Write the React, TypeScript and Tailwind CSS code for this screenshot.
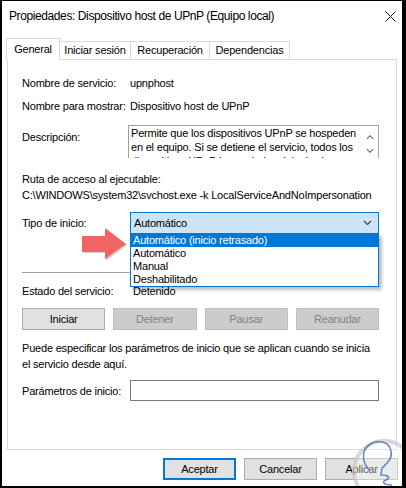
import React from 'react';

const font = "font-['Liberation_Sans',Arial,sans-serif]";

function Chevron({ up = false, color = '#606060', w = 9 }: { up?: boolean; color?: string; w?: number }) {
  return (
    <svg width={w} height="6" viewBox="0 0 9 6">
      <polyline
        points={up ? '1,5 4.5,1.5 8,5' : '1,1 4.5,4.5 8,1'}
        fill="none"
        stroke={color}
        strokeWidth="1.2"
      />
    </svg>
  );
}

function Tab({ label, width, active = false }: { label: string; width: string; active?: boolean }) {
  if (active) {
    return (
      <div className={`relative z-10 ${width} h-[22px] -mb-px bg-white border-t border-x border-[#d9d9d9] flex items-center justify-center`}>
        {label}
      </div>
    );
  }
  return (
    <div className={`${width} h-[18px] -ml-px border-t border-x border-[#d9d9d9] bg-white flex items-center justify-center`}>
      {label}
    </div>
  );
}

function DlgButton({ label, disabled = false, primary = false, className = '' }: { label: string; disabled?: boolean; primary?: boolean; className?: string }) {
  const look = disabled
    ? 'bg-[#cccccc] border border-[#bfbfbf] text-[#838383]'
    : primary
    ? 'bg-[#e1e1e1] border-2 border-[#0078d7] text-black'
    : 'bg-[#e1e1e1] border border-[#adadad] text-black';
  return <div className={`h-[22px] flex items-center justify-center ${look} ${className}`}>{label}</div>;
}

export default function App() {
  return (
    <div className={`relative w-[406px] h-[488px] bg-white border-t border-l-2 border-r-4 border-b-2 border-black overflow-hidden text-[11px] tracking-[-0.2px] text-black ${font}`}>
      {/* barra de título */}
      <div className="h-[30px] flex items-center justify-between pl-[7px] pr-[6px]">
        <span className="text-[12px] tracking-[-0.4px]">Propiedades: Dispositivo host de UPnP (Equipo local)</span>
        <svg width="11" height="11" viewBox="0 0 11 11">
          <path d="M0.5 0.5 L10.5 10.5 M10.5 0.5 L0.5 10.5" stroke="#111" strokeWidth="1" />
        </svg>
      </div>

      {/* pestañas */}
      <div className="mt-[7px] ml-[4px] flex items-end">
        <Tab label="General" width="w-[54px]" active />
        <Tab label="Iniciar sesión" width="w-[72px]" />
        <Tab label="Recuperación" width="w-[80px]" />
        <Tab label="Dependencias" width="w-[81px]" />
      </div>

      {/* panel */}
      <div className="ml-[5px] w-[390px] h-[391px] border border-[#d9d9d9] pl-[14px] pt-[16px]">
        <div className="w-[357px] leading-[14px]">
          <div className="flex">
            <div className="w-[108px]">Nombre de servicio:</div>
            <div>upnphost</div>
          </div>
          <div className="flex mt-[9px]">
            <div className="w-[108px]">Nombre para mostrar:</div>
            <div>Dispositivo host de UPnP</div>
          </div>

          <div className="flex mt-[12px]">
            <div className="w-[106px] pt-[5px]">Descripción:</div>
            <div className="relative w-[251px] h-[33px] border-t border-x border-[#a0a0a0] overflow-hidden pl-[2px] whitespace-nowrap">
              <div>Permite que los dispositivos UPnP se hospeden</div>
              <div>en el equipo. Si se detiene el servicio, todos los</div>
              <div>dispositivos UPnP hospedados dejarán de</div>
              <div className="absolute right-[4px] top-[8px] flex flex-col gap-[8px]">
                <Chevron up w={8} />
                <Chevron w={8} />
              </div>
            </div>
          </div>

          <div className="mt-[14px]">Ruta de acceso al ejecutable:</div>
          <div className="mt-[2px] whitespace-nowrap">C:\WINDOWS\system32\svchost.exe -k LocalServiceAndNoImpersonation</div>

          <div className="flex items-center mt-[10px]">
            <div className="w-[108px]">Tipo de inicio:</div>
            <div className="relative w-[249px] h-[22px] bg-[#cce4f7] border border-[#0078d7] flex items-center justify-between pl-[3px] pr-[6px]">
              <span>Automático</span>
              <Chevron color="#404040" />
              {/* lista desplegada */}
              <div className="absolute -left-px top-[20px] w-[249px] border border-[#0078d7] bg-white z-20 shadow-[3px_3px_3px_rgba(0,0,0,0.25)] leading-[13px]">
                <div className="h-[13px] bg-[#0078d7] text-white pl-[2px]">Automático (inicio retrasado)</div>
                <div className="h-[13px] pl-[2px]">Automático</div>
                <div className="h-[13px] pl-[2px]">Manual</div>
                <div className="h-[13px] pl-[2px]">Deshabilitado</div>
              </div>
            </div>
          </div>

          <div className="mt-[38px] h-px bg-[#a0a0a0]" />

          <div className="flex mt-[11px]">
            <div className="w-[111px]">Estado del servicio:</div>
            <div>Detenido</div>
          </div>

          <div className="grid grid-cols-4 gap-[8px] mt-[10px]">
            <DlgButton label="Iniciar" />
            <DlgButton label="Detener" disabled />
            <DlgButton label="Pausar" disabled />
            <DlgButton label="Reanudar" disabled />
          </div>

          <div className="mt-[10px] leading-[16px] whitespace-nowrap">
            <div>Puede especificar los parámetros de inicio que se aplican cuando se inicia</div>
            <div>el servicio desde aquí.</div>
          </div>

          <div className="flex items-center mt-[8px]">
            <div className="w-[108px]">Parámetros de inicio:</div>
            <div className="w-[249px] h-[21px] border border-[#7a7a7a] bg-white" />
          </div>
        </div>
      </div>

      {/* botones inferiores */}
      <div className="mt-[8px] flex justify-end gap-[8px] pr-[4px]">
        <DlgButton label="Aceptar" primary className="w-[73px]" />
        <DlgButton label="Cancelar" className="w-[73px]" />
        <DlgButton label="Aplicar" className="w-[73px]" />
      </div>

      {/* flecha roja */}
      <svg className="absolute left-[78px] top-[226px] z-30" width="50" height="36" viewBox="0 0 50 36">
        <polygon points="3,12 26,12 26,3 47,18 26,34 26,26 3,26" fill="rgba(0,0,0,0.18)" />
        <polygon points="2,9 25,9 25,1 46,17 25,32 25,25 2,25" fill="#f26464" />
      </svg>

      {/* marca de agua */}
      <svg className="absolute left-[346px] top-[430px] z-30 pointer-events-none" width="60" height="58" viewBox="0 0 60 58">
        <circle cx="36" cy="40" r="30" fill="rgba(255,255,255,0.35)" stroke="rgba(200,200,200,0.7)" strokeWidth="4" />
        <path
          d="M22 40 C14 32 13 20 21 14 C29 8 41 10 43 20 C45 28 38 33 34 37 L33 44 C39 44 44 46 38 49 C32 52 38 54 44 54"
          fill="none"
          stroke="rgba(70,110,180,0.8)"
          strokeWidth="1.6"
        />
      </svg>
    </div>
  );
}
